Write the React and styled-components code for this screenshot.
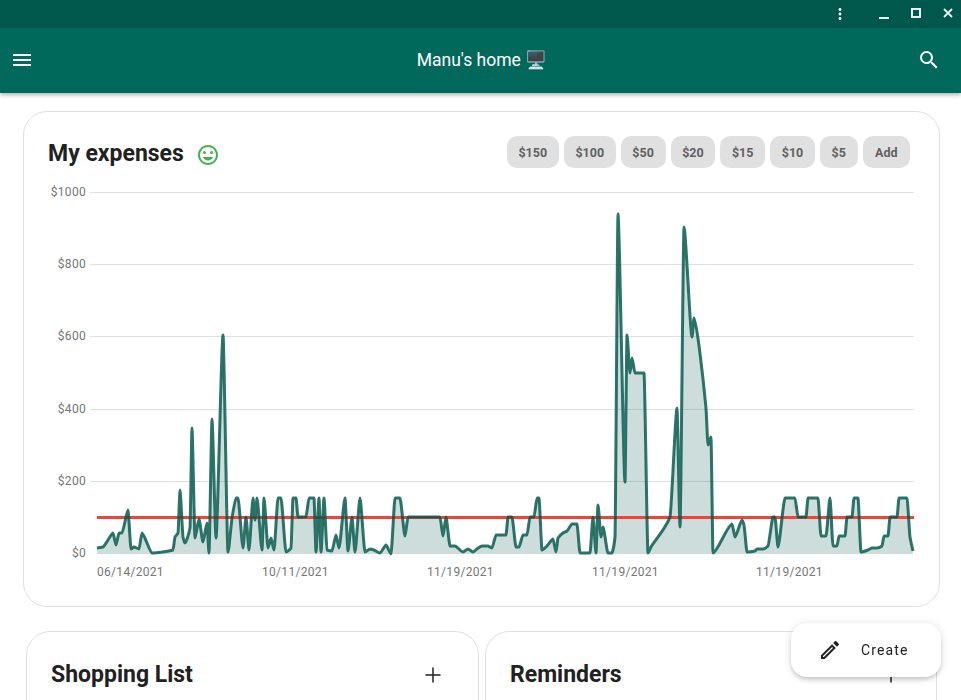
import React from 'react';
import styled, { createGlobalStyle } from 'styled-components';
import { MdMenu, MdMoreVert, MdOutlineEdit, MdSearch } from 'react-icons/md';
import { Plus } from 'lucide-react';

const GlobalStyle = createGlobalStyle`
	html, body {
		margin: 0;
		height: 100%;
		background: #fff;
		font-family: Roboto, "Noto Sans", sans-serif;
		overflow: hidden;
	}
`;

const Page = styled.div`
	height: 700px;
	overflow: hidden;
	display: flex;
	flex-direction: column;
`;
const TitleBar = styled.div`
	height: 28px;
	flex: none;
	background: #00574b;
	display: flex;
	align-items: center;
	justify-content: flex-end;
	color: #eceff1;
`;
const TitleBarMenu = styled.span`
	display: flex;
	font-size: 18px;
	margin-right: 29px;
`;
const WindowButton = styled.svg`
	width: 12px;
	height: 12px;
	margin-right: 20px;
	margin-top: -2px;
	&:last-child {
		margin-right: 7px;
	}
`;
const AppBar = styled.header`
	box-sizing: border-box;
	height: 65px;
	flex: none;
	background: #00695c;
	color: #fff;
	box-shadow: 0 2px 4px rgba(0, 0, 0, 0.3);
	display: flex;
	align-items: center;
	justify-content: space-between;
	padding: 0 20px 2px 10px;
	position: relative;
	z-index: 1;
	font-size: 24px;
`;
const AppTitle = styled.div`
	font-size: 17.5px;
	line-height: 24px;
	margin-left: 13px;
	white-space: pre;
`;
const Content = styled.main`
	padding: 18px 21px 0 23px;
`;
const Card = styled.section`
	box-sizing: border-box;
	border: 1px solid #e0e0e0;
	border-radius: 24px;
	background: #fff;
`;
const ExpensesCard = styled(Card)`
	height: 496px;
	padding-top: 24px;
`;
const ExpensesHeader = styled.div`
	display: flex;
	align-items: center;
	justify-content: space-between;
	height: 32px;
	padding: 0 29px 0 24px;
`;
const CardTitle = styled.h2`
	margin: 4px 0 0;
	font-size: 23px;
	font-weight: 700;
	line-height: 32px;
	color: #212121;
`;
const TitleGroup = styled.div`
	display: flex;
	align-items: center;
	gap: 12px;
`;
const Mood = styled.svg`
	width: 24px;
	height: 24px;
	fill: #4caf50;
	margin-top: 5px;
`;
const Amounts = styled.div`
	display: flex;
	gap: 5px;
`;
const Amount = styled.button`
	height: 32px;
	padding: 0 ${(props) => (props.$wide ? '12.5px' : '11.65px')};
	border: 0;
	border-radius: 10px;
	background: #e0e0e0;
	color: #616161;
	font: 700 12.5px Roboto, sans-serif;
`;
const Chart = styled.svg`
	display: block;
	margin-top: 8px;
	font-family: Roboto, sans-serif;
	font-size: 12px;
	letter-spacing: 0.3px;
`;
const Lists = styled.div`
	display: grid;
	grid-template-columns: 453px 452px;
	gap: 6px;
	margin: 24px 3px 0;
`;
const ListCard = styled(Card)`
	height: 200px;
	padding: 23px 33px 0 24px;
`;
const ListHeader = styled.div`
	display: flex;
	align-items: center;
	justify-content: space-between;
`;
const AddIcon = styled.span`
	display: flex;
	color: #212121;
	margin-top: 4px;
`;
const CreateButton = styled.button`
	position: fixed;
	right: 20px;
	top: 623px;
	width: 150px;
	height: 54px;
	border: 0;
	border-radius: 16px;
	background: #fff;
	color: #212121;
	box-shadow: 0 3px 5px -1px rgba(0, 0, 0, 0.2), 0 1px 10px rgba(0, 0, 0, 0.12);
	display: flex;
	align-items: center;
	padding: 0 0 0 27px;
	gap: 19px;
	font: 400 14px Roboto, sans-serif;
	letter-spacing: 1.15px;
	z-index: 2;
	svg {
		font-size: 24px;
	}
`;

const gridLines = [
	['$1000', 192],
	['$800', 264],
	['$600', 336],
	['$400', 409],
	['$200', 481],
	['$0', 553],
];
const dates = [
	['06/14/2021', 97],
	['10/11/2021', 262],
	['11/19/2021', 427],
	['11/19/2021', 592],
	['11/19/2021', 756],
];
const amounts = ['$150', '$100', '$50', '$20', '$15', '$10', '$5', 'Add'];

// traced from the spending history, x and y are in page pixels
const expenses = [
	[97, 548], [103, 547], [108, 540], [113, 533], [116, 545], [119, 533], [122, 533], [128, 510], [131, 549], [134, 547],
	[139, 549], [142, 533], [152, 553], [173, 550], [175, 537], [178, 533], [180, 490], [183, 537], [185, 543], [190, 528],
	[192, 428], [195, 538], [199, 519], [203, 542], [207, 523], [209, 553], [212, 419], [216, 538], [223, 335], [228, 552],
	[232, 518], [236, 498], [238, 498], [243, 548], [246, 517], [249, 550], [253, 498], [255, 520], [257, 498], [262, 550],
	[264, 498], [268, 548], [271, 538], [274, 550], [278, 498], [281, 498], [286, 552], [291, 548], [293, 498], [296, 498],
	[298, 517], [306, 517], [309, 498], [314, 498], [316, 552], [319, 498], [321, 552], [324, 498], [327, 550], [332, 551],
	[336, 535], [339, 548], [345, 498], [348, 551], [352, 517], [355, 552], [360, 498], [365, 552], [370, 549], [374, 550],
	[380, 553], [386, 545], [391, 554], [395, 498], [400, 498], [405, 536], [408, 517], [440, 517], [443, 536], [446, 517],
	[450, 546], [455, 546], [463, 552], [468, 549], [473, 552], [478, 548], [482, 546], [488, 546], [492, 548], [496, 535],
	[506, 535], [508, 517], [512, 517], [516, 547], [519, 547], [523, 535], [527, 535], [530, 517], [534, 517], [537, 498],
	[539, 498], [542, 550], [547, 546], [553, 539], [556, 552], [558, 538], [563, 533], [567, 531], [572, 524], [577, 524],
	[580, 553], [590, 553], [593, 517], [596, 553], [598, 505], [601, 537], [603, 527], [608, 553], [612, 553], [615, 537],
	[618, 214], [625, 482], [627, 335], [630, 373], [632, 358], [635, 373], [644, 373], [648, 553], [651, 547], [670, 517],
	[677, 408], [680, 527], [684, 227], [692, 337], [694, 318], [706, 408], [708, 445], [711, 437], [713, 553], [732, 524],
	[735, 537], [742, 520], [744, 525], [747, 552], [755, 551], [757, 549], [763, 549], [768, 546], [773, 517], [775, 517],
	[778, 547], [785, 498], [795, 498], [798, 517], [806, 517], [808, 498], [818, 498], [821, 536], [826, 536], [830, 498],
	[833, 546], [837, 546], [839, 536], [845, 536], [847, 517], [852, 517], [854, 498], [858, 498], [861, 552], [868, 550],
	[872, 548], [877, 548], [882, 546], [884, 536], [888, 536], [890, 517], [897, 517], [899, 498], [907, 498], [910, 537],
	[913, 551],
];

// monotone-ish cubic through the points, short handles keep the peaks sharp
const monotonePath = (points) => {
	const slopes = points.slice(1).map(([x, y], i) => (y - points[i][1]) / (x - points[i][0]));
	const tangents = points.map((_, i) => {
		if (i === 0) return slopes[0];
		if (i === points.length - 1) return slopes[i - 1];
		const a = slopes[i - 1];
		const b = slopes[i];
		return a * b <= 0 ? 0 : (2 * a * b) / (a + b);
	});
	return points.reduce((d, [x, y], i) => {
		if (i === 0) return `M${x} ${y}`;
		const [px, py] = points[i - 1];
		const step = (x - px) / 5;
		return `${d}C${px + step} ${py + tangents[i - 1] * step} ${x - step} ${y - tangents[i] * step} ${x} ${y}`;
	}, '');
};

const ExpensesChart = () => {
	const line = monotonePath(expenses);
	return (
		<Chart width="916" height="410" viewBox="24 176 916 410">
			{gridLines.map(([label, y]) => (
				<g key={label}>
					<text x="86" y={y + 4} textAnchor="end" fill="#757575">{label}</text>
					{y < 553 && <line x1="90" x2="914" y1={y + 0.5} y2={y + 0.5} stroke="#e0e0e0" />}
				</g>
			))}
			{dates.map(([label, x]) => (
				<text key={x} x={x} y="576" fill="#757575">{label}</text>
			))}
			<path d={`${line}L913 554L97 554Z`} fill="#00574b" fillOpacity="0.2" />
			<line x1="97" x2="914" y1="517.5" y2="517.5" stroke="#f44336" strokeWidth="3" />
			<path d={line} fill="none" stroke="#00574b" strokeOpacity="0.82" strokeWidth="3" strokeLinejoin="round" />
		</Chart>
	);
};

const App = () => (
	<Page>
		<GlobalStyle />
		<TitleBar>
			<TitleBarMenu><MdMoreVert /></TitleBarMenu>
			<WindowButton viewBox="0 0 12 12"><path d="M1 10h10v2H1z" fill="currentColor" /></WindowButton>
			<WindowButton viewBox="0 0 12 12"><path d="M2 2h8v8H2z" fill="none" stroke="currentColor" strokeWidth="2" /></WindowButton>
			<WindowButton viewBox="0 0 12 12"><path d="M2 2l8 8M10 2l-8 8" fill="none" stroke="currentColor" strokeWidth="1.8" /></WindowButton>
		</TitleBar>
		<AppBar>
			<MdMenu />
			<AppTitle>Manu's home 🖥️</AppTitle>
			<MdSearch />
		</AppBar>
		<Content>
			<ExpensesCard>
				<ExpensesHeader>
					<TitleGroup>
						<CardTitle>My expenses</CardTitle>
						<Mood viewBox="0 0 24 24">
							<circle cx="15.5" cy="9.5" r="1.5" />
							<circle cx="8.5" cy="9.5" r="1.5" />
							<path d="M12 2C6.47 2 2 6.48 2 12s4.47 10 10 10 10-4.48 10-10S17.53 2 12 2zm0 18c-4.42 0-8-3.58-8-8s3.58-8 8-8 8 3.58 8 8-3.58 8-8 8z" />
							<path d="M12 17.5c2.33 0 4.31-1.46 5.11-3.5H6.89c.8 2.04 2.78 3.5 5.11 3.5z" />
						</Mood>
					</TitleGroup>
					<Amounts>
						{amounts.map((amount) => <Amount key={amount} $wide={amount === 'Add'}>{amount}</Amount>)}
					</Amounts>
				</ExpensesHeader>
				<ExpensesChart />
			</ExpensesCard>
			<Lists>
				<ListCard>
					<ListHeader>
						<CardTitle>Shopping List</CardTitle>
						<AddIcon><Plus size={24} strokeWidth={1.5} /></AddIcon>
					</ListHeader>
				</ListCard>
				<ListCard>
					<ListHeader>
						<CardTitle>Reminders</CardTitle>
						<AddIcon><Plus size={24} strokeWidth={1.5} /></AddIcon>
					</ListHeader>
				</ListCard>
			</Lists>
		</Content>
		<CreateButton><MdOutlineEdit />Create</CreateButton>
	</Page>
);

export default App;
